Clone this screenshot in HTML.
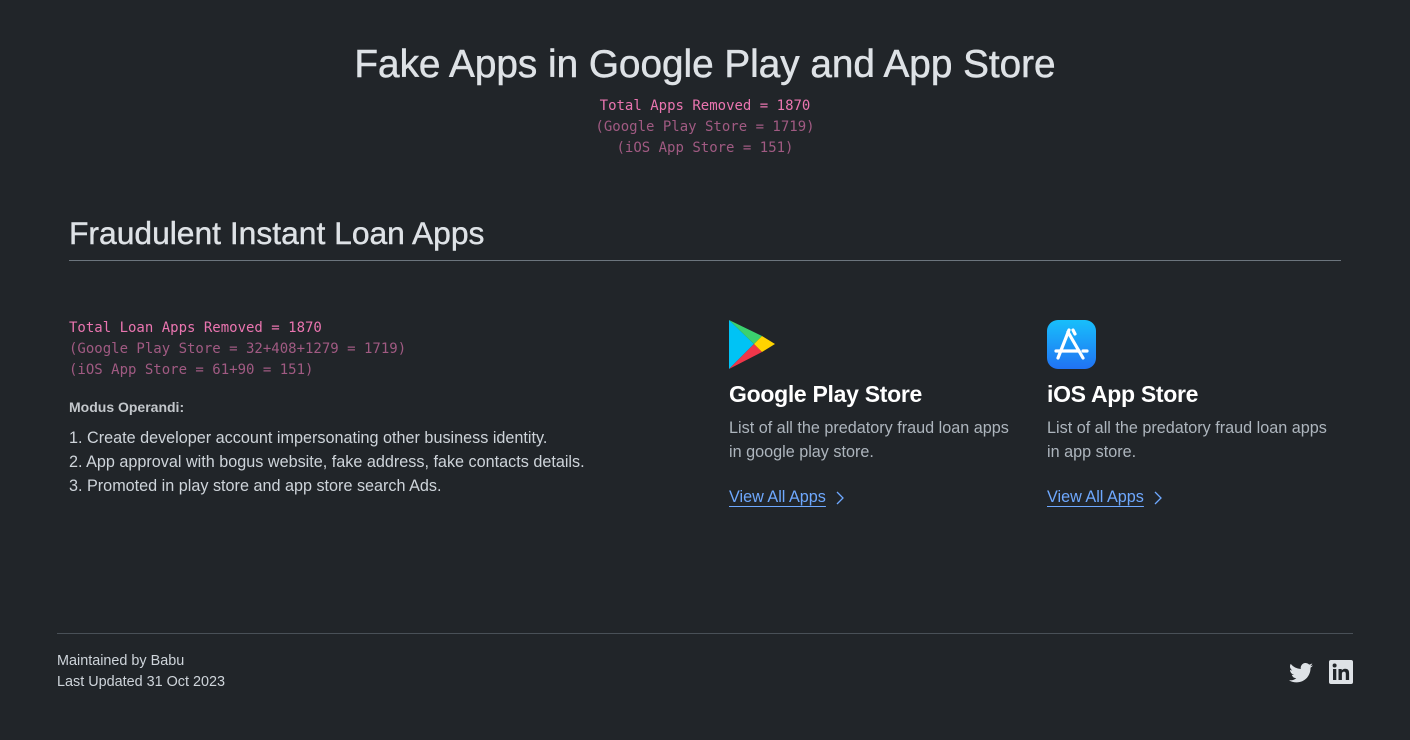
<!DOCTYPE html>
<html><head><meta charset="utf-8"><style>
body{margin:0;background:#212529;width:1410px;height:740px;overflow:hidden;font-family:"Liberation Sans",sans-serif;color:#dee2e6;position:relative}
.a{position:absolute}
.mono{font-family:"DejaVu Sans Mono",monospace;font-size:14px;line-height:21px}
.pk{color:#ea75b0}.dp{color:#a05a82}
h1{margin:0;font-weight:normal;font-size:38.7px;color:#dee2e6;text-align:center;width:1410px;top:43px;left:0;-webkit-text-stroke:0.5px #dee2e6}
h2{margin:0;font-weight:normal;font-size:31.8px;color:#dee2e6;-webkit-text-stroke:0.4px #dee2e6}
.card h3{margin:0;font-size:23px;font-weight:700;color:#fff;letter-spacing:-0.3px}
.card p{margin:0;font-size:16.2px;line-height:24px;color:#adb5bd}
.link{color:#6ea8fe;font-size:16.2px;text-decoration:underline;text-underline-offset:4px}
</style></head><body>
<h1 class="a">Fake Apps in Google Play and App Store</h1>
<div class="a mono" style="top:96px;left:0;width:1410px;text-align:center"><div class="pk">Total Apps Removed = 1870</div><div class="dp">(Google Play Store = 1719)</div><div class="dp">(iOS App Store = 151)</div></div>
<h2 class="a" style="left:69px;top:215px">Fraudulent Instant Loan Apps</h2>
<div class="a" style="left:69px;top:260px;width:1272px;height:1px;background:#6c757d"></div>
<div class="a mono" style="left:69px;top:318px"><div class="pk">Total Loan Apps Removed = 1870</div><div class="dp">(Google Play Store = 32+408+1279 = 1719)</div><div class="dp">(iOS App Store = 61+90 = 151)</div></div>
<div class="a" style="left:69px;top:399px;font-size:14px;font-weight:700;color:#c3c7cb">Modus Operandi:</div>
<div class="a" style="left:69px;top:426px;font-size:16.2px;line-height:24px;color:#ced4da">1. Create developer account impersonating other business identity.<br>2. App approval with bogus website, fake address, fake contacts details.<br>3. Promoted in play store and app store search Ads.</div>
<div class="a card" style="left:729px;top:320px">
<svg width="46" height="49" viewBox="0 0 46 49"><polygon points="0,0 25,24 0,49" fill="#00c3f5"/><polygon points="0,0 25,24 33,16" fill="#3bd16f"/><polygon points="0,49 25,24 33,32" fill="#f0364a"/><polygon points="25,24 33,16 46,24 33,32" fill="#ffd400"/></svg>
<h3 style="margin-top:7px">Google Play Store</h3>
<p style="margin-top:8px">List of all the predatory fraud loan apps<br>in google play store.</p>
<div style="margin-top:24px;display:flex;align-items:center"><span class="link">View All Apps</span><svg style="margin-left:10px" width="8" height="14" viewBox="0 0 8 14"><path d="M1 1l6 6-6 6" stroke="#6ea8fe" stroke-width="1.3" fill="none"/></svg></div>
</div>
<div class="a card" style="left:1047px;top:320px">
<svg width="49" height="49" viewBox="0 0 49 49"><defs><linearGradient id="g" x1="0" y1="0" x2="0" y2="1"><stop offset="0" stop-color="#18bffb"/><stop offset="1" stop-color="#2072f3"/></linearGradient></defs><rect width="49" height="49" rx="11" fill="url(#g)"/><g stroke="#fff" stroke-width="3.2" stroke-linecap="round" fill="none"><line x1="22" y1="10" x2="11" y2="38"/><line x1="21" y1="12" x2="36" y2="38"/><line x1="26" y1="10" x2="28" y2="14"/><line x1="9" y1="31" x2="32" y2="31"/><line x1="36" y1="31" x2="40" y2="31"/></g></svg>
<h3 style="margin-top:7px">iOS App Store</h3>
<p style="margin-top:8px">List of all the predatory fraud loan apps<br>in app store.</p>
<div style="margin-top:24px;display:flex;align-items:center"><span class="link">View All Apps</span><svg style="margin-left:10px" width="8" height="14" viewBox="0 0 8 14"><path d="M1 1l6 6-6 6" stroke="#6ea8fe" stroke-width="1.3" fill="none"/></svg></div>
</div>
<div class="a" style="left:57px;top:633px;width:1296px;height:1px;background:#495057"></div>
<div class="a" style="left:57px;top:651px;font-size:14.4px;line-height:21px;color:#ced4da">Maintained by Babu<br>Last Updated 31 Oct 2023</div>
<svg class="a" style="left:1289px;top:663px" width="24" height="20" viewBox="0 0 24 20"><path fill="#dee2e6" d="M24 2.4a9.8 9.8 0 0 1-2.8.8A4.9 4.9 0 0 0 23.3.4a9.8 9.8 0 0 1-3.1 1.2A4.9 4.9 0 0 0 11.8 6 14 14 0 0 1 1.7.9a4.9 4.9 0 0 0 1.5 6.6A4.9 4.9 0 0 1 1 6.9a4.9 4.9 0 0 0 3.9 4.8 4.9 4.9 0 0 1-2.2.1 4.9 4.9 0 0 0 4.6 3.4A9.9 9.9 0 0 1 0 17.2 14 14 0 0 0 7.5 19.4c9.1 0 14-7.5 14-14v-.6A10 10 0 0 0 24 2.4z"/></svg>
<svg class="a" style="left:1329px;top:660px" width="24" height="24" viewBox="0 0 24 24"><rect width="24" height="24" rx="2" fill="#dee2e6"/><g fill="#212529"><rect x="4" y="9" width="3.3" height="11"/><circle cx="5.6" cy="5.5" r="2"/><path d="M9.5 9h3.2v1.5c.5-.9 1.7-1.8 3.4-1.8 3.5 0 4 2.2 4 5V20h-3.3v-5.5c0-1.3 0-2.9-1.8-2.9s-2.1 1.4-2.1 2.8V20H9.5z"/></g></svg>
</body></html>
